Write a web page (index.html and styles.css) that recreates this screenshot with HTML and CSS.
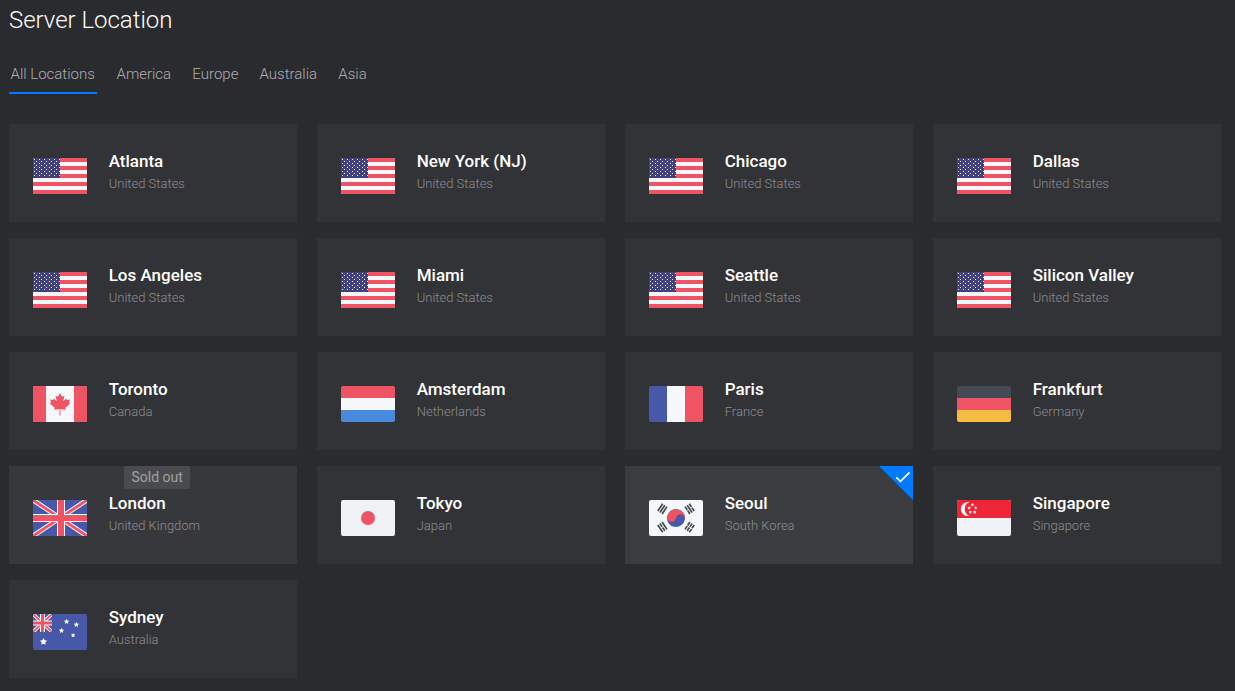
FILE: index.html
```html
<!DOCTYPE html>
<html lang="en">
<head>
  <meta charset="UTF-8">
  <meta name="viewport" content="width=device-width, initial-scale=1.0">
  <title>Server Location</title>
  <link rel="stylesheet" href="styles.css">
</head>
<body>
  <!-- Flag symbols shared by the cards -->
  <svg class="sprite" width="0" height="0">
    <defs>
      <pattern id="us-stars" width="5" height="4" patternUnits="userSpaceOnUse">
        <rect x="1" y="1" width="1" height="1" fill="#f5f7fb"/>
        <rect x="3" y="3" width="1" height="1" fill="#f5f7fb"/>
      </pattern>
    </defs>
    <symbol id="flag-us" viewBox="0 0 54 36">
      <path fill="#f5f7fb" d="M0 0h54v36H0z"/>
      <path fill="#ef5464" d="M0 0h54v4H0zM0 8h54v4H0zM0 16h54v4H0zM0 24h54v4H0zM0 32h54v4H0z"/>
      <path fill="#41427c" d="M0 0h27v20H0z"/>
      <path fill="url(#us-stars)" d="M0 0h27v19H0z"/>
    </symbol>
    <symbol id="flag-ca" viewBox="0 0 54 36">
      <path fill="#f5f7fb" d="M0 0h54v36H0z"/>
      <path fill="#ef5464" d="M0 0h13v36H0zM41 0h13v36H41z"/>
      <path fill="#ef5464" d="M27 7l2.1 3.8 2.3-1.1-1.1 5.6 2.9-2.9.7 1.6 3-.5-1 3.2 1.3.8-4.9 4.2.6 2-5.5-.8.1 6.6h-1l.1-6.6-5.5.8.6-2-4.9-4.2 1.3-.8-1-3.2 3 .5.7-1.6 2.9 2.9-1.1-5.6 2.3 1.1z"/>
    </symbol>
    <symbol id="flag-nl" viewBox="0 0 54 36">
      <path fill="#ef5464" d="M0 0h54v12H0z"/>
      <path fill="#f5f7fb" d="M0 12h54v12H0z"/>
      <path fill="#4a89dc" d="M0 24h54v12H0z"/>
    </symbol>
    <symbol id="flag-fr" viewBox="0 0 54 36">
      <path fill="#4758a9" d="M0 0h18v36H0z"/>
      <path fill="#f5f7fb" d="M18 0h18v36H18z"/>
      <path fill="#ef5464" d="M36 0h18v36H36z"/>
    </symbol>
    <symbol id="flag-de" viewBox="0 0 54 36">
      <path fill="#434a54" d="M0 0h54v12H0z"/>
      <path fill="#ef5464" d="M0 12h54v12H0z"/>
      <path fill="#f6bb42" d="M0 24h54v12H0z"/>
    </symbol>
    <symbol id="flag-gb" viewBox="0 0 54 36">
      <path fill="#4758a9" d="M0 0h54v36H0z"/>
      <path stroke="#f5f7fb" stroke-width="4.8" d="M0 0l54 36M54 0L0 36"/>
      <path stroke="#ef5464" stroke-width="2.8" d="M0 0l54 36M54 0L0 36"/>
      <path fill="#f5f7fb" d="M24 0h8v36h-8zM0 14h54v8H0z"/>
      <path fill="#ef5464" d="M25 0h6v36h-6zM0 15h54v6H0z"/>
    </symbol>
    <symbol id="flag-jp" viewBox="0 0 54 36">
      <path fill="#f0f2f6" d="M0 0h54v36H0z"/>
      <circle cx="27" cy="18" r="7" fill="#ef5464"/>
    </symbol>
    <symbol id="flag-kr" viewBox="0 0 54 36">
      <path fill="#f5f7fb" d="M0 0h54v36H0z"/>
      <g transform="rotate(10 27 18)">
        <circle cx="27" cy="18" r="9" fill="#4758a9"/>
        <path fill="#ef5464" d="M18 18a9 9 0 0 1 18 0 4.5 4.5 0 0 0-9 0 4.5 4.5 0 0 1-9 0z"/>
      </g>
      <g stroke="#434a54" stroke-width="1.7">
        <path transform="translate(13.4 8.8) rotate(-56)" d="M-4.4-2.6h8.8M-4.4 0h8.8M-4.4 2.6h8.8"/>
        <path transform="translate(40.6 27.2) rotate(-56)" d="M-4.4-2.6h4M.4-2.6h4M-4.4 0h4M.4 0h4M-4.4 2.6h4M.4 2.6h4"/>
        <path transform="translate(40.6 8.8) rotate(56)" d="M-4.4-2.6h4M.4-2.6h4M-4.4 0h8.8M-4.4 2.6h4M.4 2.6h4"/>
        <path transform="translate(13.4 27.2) rotate(56)" d="M-4.4-2.6h8.8M-4.4 0h4M.4 0h4M-4.4 2.6h8.8"/>
      </g>
    </symbol>
    <symbol id="star" viewBox="-10 -10 20 20">
      <path d="M0-10l2.9 6 6.6.9-4.8 4.7L5.9 8.1 0 5l-5.9 3.1 1.2-6.5-4.8-4.7 6.6-.9z"/>
    </symbol>
    <symbol id="flag-sg" viewBox="0 0 54 36">
      <path fill="#f0f2f6" d="M0 0h54v36H0z"/>
      <path fill="#ee2536" d="M0 0h54v18H0z"/>
      <path fill="#f5f7fb" d="M12.4 2.2a7 7 0 1 0 0 13.6 7.3 7.3 0 0 1 0-13.6z"/>
      <g fill="#f5f7fb">
        <use href="#star" x="13.4" y="3" width="3.8" height="3.8"/>
        <use href="#star" x="10.2" y="6" width="3.8" height="3.8"/>
        <use href="#star" x="16.9" y="6" width="3.8" height="3.8"/>
        <use href="#star" x="11.4" y="10.2" width="3.8" height="3.8"/>
        <use href="#star" x="15.8" y="10.2" width="3.8" height="3.8"/>
      </g>
    </symbol>
    <symbol id="flag-au" viewBox="0 0 54 36">
      <path fill="#4758a9" d="M0 0h54v36H0z"/>
      <svg width="19" height="18" viewBox="0 0 19 18">
        <path stroke="#f5f7fb" stroke-width="3.6" d="M0 0l19 18M19 0L0 18"/>
        <path stroke="#ef5464" stroke-width="1.7" d="M0 0l19 18M19 0L0 18"/>
        <path fill="#f5f7fb" d="M7 0h5v18H7zM0 6.5h19v5H0z"/>
        <path fill="#ef5464" d="M8 0h3v18H8zM0 7.5h19v3H0z"/>
      </svg>
      <g fill="#f5f7fb">
        <use href="#star" x="30.8" y="4.9" width="5.6" height="5.6"/>
        <use href="#star" x="40.6" y="7.9" width="5.6" height="5.6"/>
        <use href="#star" x="25.7" y="13.9" width="5.6" height="5.6"/>
        <use href="#star" x="37.7" y="18.8" width="4.8" height="4.8"/>
        <use href="#star" x="6.6" y="23.8" width="7.8" height="7.8"/>
      </g>
    </symbol>
  </svg>

  <h1 class="title">Server Location</h1>

  <div class="tabs">
    <a class="tab active">All Locations</a>
    <a class="tab">America</a>
    <a class="tab">Europe</a>
    <a class="tab">Australia</a>
    <a class="tab">Asia</a>
  </div>

  <div class="locations">
    <div class="card">
      <svg class="flag"><use href="#flag-us"/></svg>
      <div class="info"><div class="city">Atlanta</div><div class="country">United States</div></div>
    </div>
    <div class="card">
      <svg class="flag"><use href="#flag-us"/></svg>
      <div class="info"><div class="city">New York (NJ)</div><div class="country">United States</div></div>
    </div>
    <div class="card">
      <svg class="flag"><use href="#flag-us"/></svg>
      <div class="info"><div class="city">Chicago</div><div class="country">United States</div></div>
    </div>
    <div class="card">
      <svg class="flag"><use href="#flag-us"/></svg>
      <div class="info"><div class="city">Dallas</div><div class="country">United States</div></div>
    </div>
    <div class="card">
      <svg class="flag"><use href="#flag-us"/></svg>
      <div class="info"><div class="city">Los Angeles</div><div class="country">United States</div></div>
    </div>
    <div class="card">
      <svg class="flag"><use href="#flag-us"/></svg>
      <div class="info"><div class="city">Miami</div><div class="country">United States</div></div>
    </div>
    <div class="card">
      <svg class="flag"><use href="#flag-us"/></svg>
      <div class="info"><div class="city">Seattle</div><div class="country">United States</div></div>
    </div>
    <div class="card">
      <svg class="flag"><use href="#flag-us"/></svg>
      <div class="info"><div class="city">Silicon Valley</div><div class="country">United States</div></div>
    </div>
    <div class="card">
      <svg class="flag"><use href="#flag-ca"/></svg>
      <div class="info"><div class="city">Toronto</div><div class="country">Canada</div></div>
    </div>
    <div class="card">
      <svg class="flag"><use href="#flag-nl"/></svg>
      <div class="info"><div class="city">Amsterdam</div><div class="country">Netherlands</div></div>
    </div>
    <div class="card">
      <svg class="flag"><use href="#flag-fr"/></svg>
      <div class="info"><div class="city">Paris</div><div class="country">France</div></div>
    </div>
    <div class="card">
      <svg class="flag"><use href="#flag-de"/></svg>
      <div class="info"><div class="city">Frankfurt</div><div class="country">Germany</div></div>
    </div>
    <div class="card sold-out">
      <span class="badge">Sold out</span>
      <svg class="flag"><use href="#flag-gb"/></svg>
      <div class="info"><div class="city">London</div><div class="country">United Kingdom</div></div>
    </div>
    <div class="card">
      <svg class="flag"><use href="#flag-jp"/></svg>
      <div class="info"><div class="city">Tokyo</div><div class="country">Japan</div></div>
    </div>
    <div class="card selected">
      <svg class="flag"><use href="#flag-kr"/></svg>
      <div class="info"><div class="city">Seoul</div><div class="country">South Korea</div></div>
      <svg class="check" viewBox="0 0 34 34">
        <path fill="#007bff" d="M0 0h34v34z"/>
        <path fill="none" stroke="#fff" stroke-width="1.8" d="M17.3 11.3l4.2 4L30.5 6.3"/>
      </svg>
    </div>
    <div class="card">
      <svg class="flag"><use href="#flag-sg"/></svg>
      <div class="info"><div class="city">Singapore</div><div class="country">Singapore</div></div>
    </div>
    <div class="card">
      <svg class="flag"><use href="#flag-au"/></svg>
      <div class="info"><div class="city">Sydney</div><div class="country">Australia</div></div>
    </div>
  </div>
</body>
</html>
```
FILE: styles.css
```css
body {
  margin: 0;
  padding: 0 14px 0 9px;
  background: #2a2b2e;
  color: #fff;
  font-family: Roboto, "Liberation Sans", sans-serif;
}

.sprite {
  display: block;
}

.title {
  margin: 0;
  padding-top: 4px;
  font-size: 24px;
  font-weight: 300;
  line-height: 32px;
  letter-spacing: -0.03px;
}

.tabs {
  display: flex;
  gap: 17.7px;
  margin: 18px 0 30px;
}

.tab {
  padding: 10px 2px 7px 1.5px;
  border-bottom: 2px solid transparent;
  color: #aeaeb0;
  font-size: 15px;
  font-weight: 300;
  line-height: 21px;
}

.tab.active {
  padding-right: 2.5px;
  border-bottom-color: #007bff;
}

.locations {
  display: grid;
  grid-template-columns: repeat(4, 288px);
  grid-auto-rows: 98px;
  gap: 16px 20px;
}

.card {
  position: relative;
  display: flex;
  align-items: flex-start;
  box-sizing: border-box;
  padding: 24px;
  background: #323336;
}

.card.sold-out {
  background: #37383b;
}

.card.selected {
  background: #3b3c3f;
}

.flag {
  width: 54px;
  height: 36px;
  margin: 10px 21.7px 0 0;
  border-radius: 2px;
}

.city {
  font-size: 17px;
  font-weight: 500;
  line-height: 26px;
}

.country {
  color: #8c8d8f;
  font-size: 13px;
  font-weight: 300;
  line-height: 20px;
}

.badge {
  position: absolute;
  top: 0;
  left: 115px;
  box-sizing: border-box;
  width: 66px;
  padding-left: 7.5px;
  background: #4a4b4e;
  border-radius: 2px;
  color: #a0a1a3;
  font-size: 14px;
  line-height: 23px;
  white-space: nowrap;
}

.check {
  position: absolute;
  top: 0;
  right: 0;
  width: 34px;
  height: 34px;
}
```
